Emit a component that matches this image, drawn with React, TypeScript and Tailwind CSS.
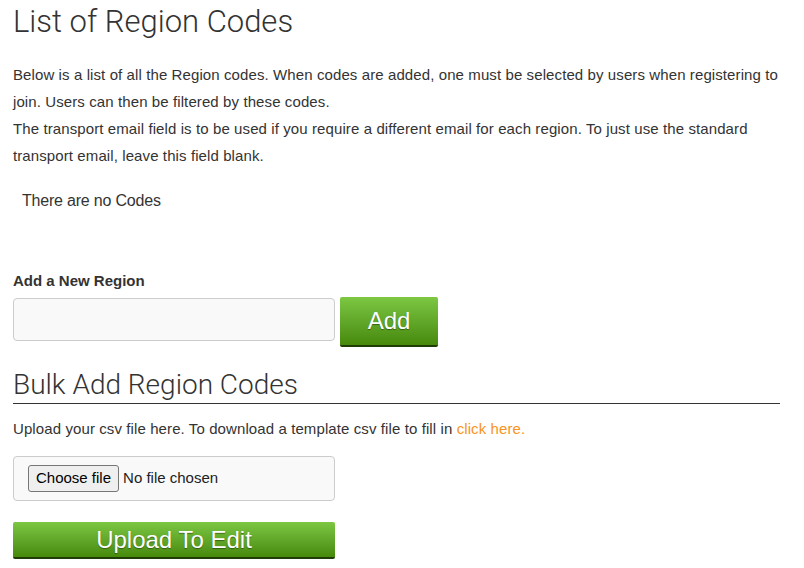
export default function App() {
  return (
    <div className="min-h-screen bg-white font-['Liberation_Sans',Arial,sans-serif] text-[#333]">
      <div className="w-[780px] pl-[13px]">
        <h1 className="pt-[4px] font-['Roboto',sans-serif] text-[31px] font-light leading-[36px] text-[#333]">
          List of Region Codes
        </h1>

        <div className="mt-[21px] text-[15px] leading-[27px] tracking-[0.1px]">
          <p>
            Below is a list of all the Region codes. When codes are added, one must be selected by users when registering to
            join. Users can then be filtered by these codes.
          </p>
          <p>
            The transport email field is to be used if you require a different email for each region. To just use the standard
            transport email, leave this field blank.
          </p>
        </div>

        <p className="mt-[20px] pl-[9px] text-[16px] leading-[24px] tracking-[-0.2px]">There are no Codes</p>

        <label className="mt-[58px] block text-[15px] font-bold leading-[20px]">Add a New Region</label>
        <div className="mt-[7px] flex items-start gap-[5px]">
          <input
            type="text"
            className="h-[43px] w-[322px] rounded-[4px] border border-[#ccc] bg-[#f9f9f9] px-3 outline-none"
          />
          <button className="h-[50px] w-[98px] -translate-y-px rounded-[2px] border-b-2 border-[#1f3d05] bg-gradient-to-b from-[#7dc742] to-[#478a0a] text-[24px] text-white [text-shadow:0_1px_1px_rgba(0,0,0,0.4)]">
            Add
          </button>
        </div>

        <h2 className="mt-[21px] border-b border-[#333] pb-[2px] font-['Roboto',sans-serif] text-[28px] font-light leading-[32px]">
          Bulk Add Region Codes
        </h2>

        <p className="mt-[15px] text-[15px] leading-[20px] tracking-[0.1px]">
          Upload your csv file here. To download a template csv file to fill in{" "}
          <a className="text-[#f7941d]">click here.</a>
        </p>

        <div className="mt-[17px] flex h-[45px] w-[322px] items-center rounded-[4px] border border-[#ccc] bg-[#f9f9f9] px-[14px]">
          <label className="flex items-center gap-[4px] text-[15px] text-[#222]">
            <input type="file" className="hidden" />
            <span className="rounded-[3px] border border-[#767676] bg-[#efefef] px-[7px] py-[1px] text-black">Choose file</span>
            <span>No file chosen</span>
          </label>
        </div>

        <button className="mt-[21px] h-[37px] w-[322px] rounded-[2px] border-b-2 border-[#1f3d05] bg-gradient-to-b from-[#7dc742] to-[#478a0a] text-[24px] leading-[34px] text-white [text-shadow:0_1px_1px_rgba(0,0,0,0.4)]">
          Upload To Edit
        </button>
      </div>
    </div>
  );
}
